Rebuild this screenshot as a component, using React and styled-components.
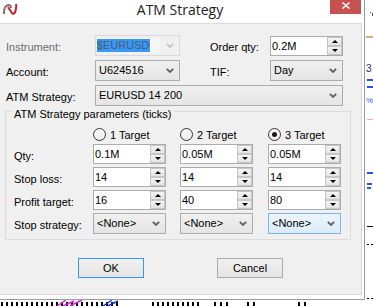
import React from "react";
import styled, { createGlobalStyle } from "styled-components";

const GlobalStyle = createGlobalStyle`
  html, body { margin: 0; padding: 0; background: #ffffff; }
  body {
    font-family: "Liberation Sans", Arial, sans-serif;
    font-size: 11px;
    color: #000;
  }
  * { box-sizing: border-box; }
`;

const Page = styled.div`
  position: relative;
  width: 373px;
  height: 306px;
  overflow: hidden;
  background: #ffffff;
`;

const ChartSvg = styled.svg`
  position: absolute;
  left: 0;
  top: 0;
  width: 373px;
  height: 306px;
`;

const Window = styled.div`
  position: relative;
  z-index: 1;
  width: 365px;
  height: 300px;
  background: #ffffff;
  border-right: 1px solid #9c9c9c;
  border-bottom: 1px solid #9c9c9c;
  padding: 0 2px 4px 0;
  display: flex;
  flex-direction: column;
`;

const TitleBar = styled.div`
  height: 23px;
  display: grid;
  grid-template-columns: 30px 1fr 31px;
  align-items: start;
  padding-right: 1px;
`;

const AppIcon = styled.svg`
  margin: 3px 0 0 2px;
  width: 16px;
  height: 12px;
`;

const Title = styled.div`
  font-family: "Open Sans", "Noto Sans", sans-serif;
  font-size: 14px;
  line-height: 20px;
  color: #222;
  text-align: center;
  white-space: nowrap;
`;

const CloseButton = styled.div`
  height: 14px;
  background: #c75050;
  display: flex;
  justify-content: center;
  align-items: flex-start;
  padding-top: 2px;
`;

const Client = styled.div`
  height: 272px;
  background: #f0f0f0;
  border-top: 1px solid #dadada;
  border-right: 1px solid #dadada;
  border-bottom: 1px solid #dadada;
  padding-top: 11px;
  display: flex;
  flex-direction: column;
`;

const FormRow = styled.div`
  display: flex;
  align-items: center;
  height: 21px;
  margin-bottom: ${(p) => p.$mb ?? 4}px;
`;

const Label = styled.span`
  flex: none;
  width: ${(p) => p.$w}px;
  padding-left: ${(p) => p.$pl ?? 0}px;
  margin-left: ${(p) => p.$ml ?? 0}px;
  padding-top: 4px;
  line-height: 13px;
  white-space: nowrap;
  color: ${(p) => (p.$disabled ? "#6d6d6d" : "#000")};
`;

const GroupLabel = styled.span`
  padding-top: 4px;
  line-height: 13px;
  white-space: nowrap;
`;

const comboBorder = (p) =>
  p.$focused ? "#7eb4ea" : p.$disabled ? "#d9d9d9" : "#acacac";
const comboBg = (p) =>
  p.$focused
    ? "linear-gradient(#ecf4fc, #dcecfc)"
    : p.$disabled
    ? "#f0f0f0"
    : "linear-gradient(#f0f0f0, #e5e5e5)";

const Combo = styled.div`
  flex: none;
  width: ${(p) => p.$w}px;
  height: 21px;
  border: 1px solid ${comboBorder};
  background: ${comboBg};
  display: flex;
  align-items: center;
  padding: 0 5px 0 ${(p) => (p.$disabled ? 1 : 3)}px;
`;

const ComboText = styled.span`
  flex: 1;
  white-space: nowrap;
  overflow: hidden;
  line-height: 13px;
`;

const EditArea = styled.span`
  flex: none;
  width: 63px;
  height: 15px;
  background: #f7f7f7;
  display: flex;
  align-items: center;
  margin-right: auto;
`;

const Selected = styled.span`
  background: #3399ff;
  color: #5a5a5a;
  line-height: 13px;
  white-space: nowrap;
`;

const Chevron = styled.svg`
  flex: none;
  width: 8px;
  height: 5px;
`;

const Spinner = styled.div`
  flex: none;
  width: 73px;
  height: 20px;
  border: 1px solid #acacac;
  background: #ffffff;
  display: flex;
  align-items: stretch;
`;

const SpinText = styled.span`
  flex: 1;
  padding-left: 1px;
  display: flex;
  align-items: center;
  white-space: nowrap;
`;

const SpinButtons = styled.div`
  flex: none;
  width: 15px;
  display: grid;
  grid-template-rows: 1fr 1fr;
`;

const SpinBtn = styled.div`
  border: 1px solid #c6c6c6;
  background: linear-gradient(#f4f4f4, #e4e4e4);
  display: flex;
  align-items: center;
  justify-content: center;
  &::after {
    content: "";
    width: 0;
    height: 0;
    border-left: 3px solid transparent;
    border-right: 3px solid transparent;
    ${(p) =>
      p.$down ? "border-top: 3px solid #000;" : "border-bottom: 3px solid #000;"}
  }
`;

const Group = styled.fieldset`
  margin: -2px 0 0 5px;
  width: 346px;
  min-inline-size: 0;
  padding: 7px 0 5px 8px;
  border: 1px solid #dcdcdc;
`;

const GroupGrid = styled.div`
  display: grid;
  grid-template-columns: 65px 73px 74px 73px;
  grid-template-rows: 15px 20px 20px 20px 21px;
  column-gap: 14px;
  row-gap: 3px;
  align-items: center;
  justify-items: start;
  justify-content: start;
`;

const Legend = styled.legend`
  margin-left: -2px;
  padding: 5px 2px 0 2px;
  line-height: 10px;
  font-size: 11px;
  white-space: nowrap;
`;

const RadioItem = styled.label`
  align-self: end;
  display: flex;
  align-items: center;
  gap: 4px;
  height: 13px;
  white-space: nowrap;
`;

const RadioCircle = styled.span`
  flex: none;
  width: 13px;
  height: 13px;
  border-radius: 50%;
  border: 1px solid #333;
  background: linear-gradient(#fdfdfd, #ececec);
  display: flex;
  align-items: center;
  justify-content: center;
  &::after {
    content: "";
    width: 5px;
    height: 5px;
    border-radius: 50%;
    background: ${(p) => (p.$checked ? "#1a1a1a" : "transparent")};
  }
`;

const ButtonRow = styled.div`
  display: flex;
  gap: 73px;
  margin-top: 18px;
  padding-left: 78px;
`;

const DlgButton = styled.div`
  width: 66px;
  height: 20px;
  border: 1px solid ${(p) => (p.$default ? "#3399ff" : "#acacac")};
  background: linear-gradient(#f0f0f0, #e5e5e5);
  display: flex;
  align-items: center;
  justify-content: center;
  line-height: 13px;
  color: #000;
`;

const ChevronIcon = ({ color = "#606060" }) => (
  <Chevron viewBox="0 0 8 5">
    <polyline
      points="0.8,0.8 4,4 7.2,0.8"
      fill="none"
      stroke={color}
      strokeWidth="1.8"
    />
  </Chevron>
);

const ComboBox = ({ w, text, focused }) => (
  <Combo $w={w} $focused={focused}>
    <ComboText>{text}</ComboText>
    <ChevronIcon />
  </Combo>
);

const NumericUpDown = ({ value }) => (
  <Spinner>
    <SpinText>{value}</SpinText>
    <SpinButtons>
      <SpinBtn />
      <SpinBtn $down />
    </SpinButtons>
  </Spinner>
);

const Radio = ({ label, checked }) => (
  <RadioItem>
    <RadioCircle $checked={checked} />
    {label}
  </RadioItem>
);

const bars = [];
for (let x = 1; x < 120; x += 5) bars.push(x);
for (let x = 152; x < 202; x += 5) bars.push(x);
[214, 220, 226, 247, 253, 298, 304].forEach((x) => bars.push(x));

const ChartBackground = () => (
  <ChartSvg viewBox="0 0 373 306">
    {bars.map((x) => (
      <rect key={x} x={x} y={302} width={2} height={4} fill="#000" />
    ))}
    <path
      d="M57 306 L66 300 M63 306 L74 301 M70 306 L82 300"
      stroke="#e020e0"
      strokeWidth="1.5"
      fill="none"
    />
    <path
      d="M103 306 L112 300 M108 306 L118 301"
      stroke="#2030e0"
      strokeWidth="1.5"
      fill="none"
    />
    <rect x="370" y="12" width="1" height="1" fill="#3050e0" />
    <rect x="372" y="13" width="1" height="3" fill="#3050e0" />
    <rect x="366" y="36" width="7" height="2" fill="#d8b080" />
    <text x="366" y="72" fontSize="10" fill="#202a80" fontFamily="Liberation Sans">
      3
    </text>
    <rect x="367" y="79" width="6" height="2" fill="#2a50e8" />
    <rect x="367" y="86" width="6" height="2" fill="#2a50e8" />
    <text x="366" y="103" fontSize="8" fill="#2a50e8" fontFamily="Liberation Sans">
      %
    </text>
    <rect x="367" y="119" width="6" height="1" fill="#f0b0c0" />
    <rect x="367" y="172" width="6" height="2" fill="#2a50e8" />
    <rect x="367" y="183" width="5" height="2" fill="#2a50e8" />
    <rect x="367" y="187" width="4" height="2" fill="#2a50e8" />
    <rect x="367" y="226" width="6" height="1" fill="#000" />
    <rect x="367" y="244" width="2" height="1" fill="#000" />
    <rect x="371" y="244" width="2" height="1" fill="#000" />
    <rect x="367" y="298" width="2" height="1" fill="#000" />
    <rect x="371" y="298" width="2" height="1" fill="#000" />
  </ChartSvg>
);

export default function App() {
  return (
    <Page>
      <GlobalStyle />
      <ChartBackground />
      <Window>
        <TitleBar>
          <AppIcon viewBox="0 0 16 12">
            <path
              d="M2 11 C1.5 5 4 1.5 7 2 C8.5 2.3 9 4 9 5"
              fill="none"
              stroke="#8c6f6f"
              strokeWidth="2"
            />
            <path
              d="M6 4 L10 10 C11 11.5 13 10.5 13.5 8 C14 6 14.5 3 14 1"
              fill="none"
              stroke="#c8202a"
              strokeWidth="2"
            />
          </AppIcon>
          <Title>ATM Strategy</Title>
          <CloseButton>
            <svg width="8" height="7" viewBox="0 0 8 7">
              <path d="M0.5 0.5 L7.5 6.5 M7.5 0.5 L0.5 6.5" stroke="#fff" strokeWidth="1.5" />
            </svg>
          </CloseButton>
        </TitleBar>
        <Client>
          <FormRow>
            <Label $w={95} $pl={6} $disabled>
              Instrument:
            </Label>
            <Combo $w={85} $disabled>
              <EditArea>
                <Selected>$EURUSD</Selected>
              </EditArea>
              <ChevronIcon color="#c4c4c4" />
            </Combo>
            <Label $w={60} $ml={30}>
              Order qty:
            </Label>
            <NumericUpDown value="0.2M" />
          </FormRow>
          <FormRow>
            <Label $w={95} $pl={6}>
              Account:
            </Label>
            <ComboBox w={85} text="U624516" />
            <Label $w={60} $ml={30}>
              TIF:
            </Label>
            <ComboBox w={73} text="Day" />
          </FormRow>
          <FormRow $mb={0}>
            <Label $w={95} $pl={6}>
              ATM Strategy:
            </Label>
            <ComboBox w={248} text="EURUSD 14 200" />
          </FormRow>
          <Group>
            <Legend>ATM Strategy parameters (ticks)</Legend>
            <GroupGrid>
              <span />
              <Radio label="1 Target" />
              <Radio label="2 Target" />
              <Radio label="3 Target" checked />

              <GroupLabel>Qty:</GroupLabel>
              <NumericUpDown value="0.1M" />
              <NumericUpDown value="0.05M" />
              <NumericUpDown value="0.05M" />

              <GroupLabel>Stop loss:</GroupLabel>
              <NumericUpDown value="14" />
              <NumericUpDown value="14" />
              <NumericUpDown value="14" />

              <GroupLabel>Profit target:</GroupLabel>
              <NumericUpDown value="16" />
              <NumericUpDown value="40" />
              <NumericUpDown value="80" />

              <GroupLabel>Stop strategy:</GroupLabel>
              <ComboBox w={73} text="<None>" />
              <ComboBox w={73} text="<None>" />
              <ComboBox w={73} text="<None>" focused />
            </GroupGrid>
          </Group>
          <ButtonRow>
            <DlgButton $default>OK</DlgButton>
            <DlgButton>Cancel</DlgButton>
          </ButtonRow>
        </Client>
      </Window>
    </Page>
  );
}
